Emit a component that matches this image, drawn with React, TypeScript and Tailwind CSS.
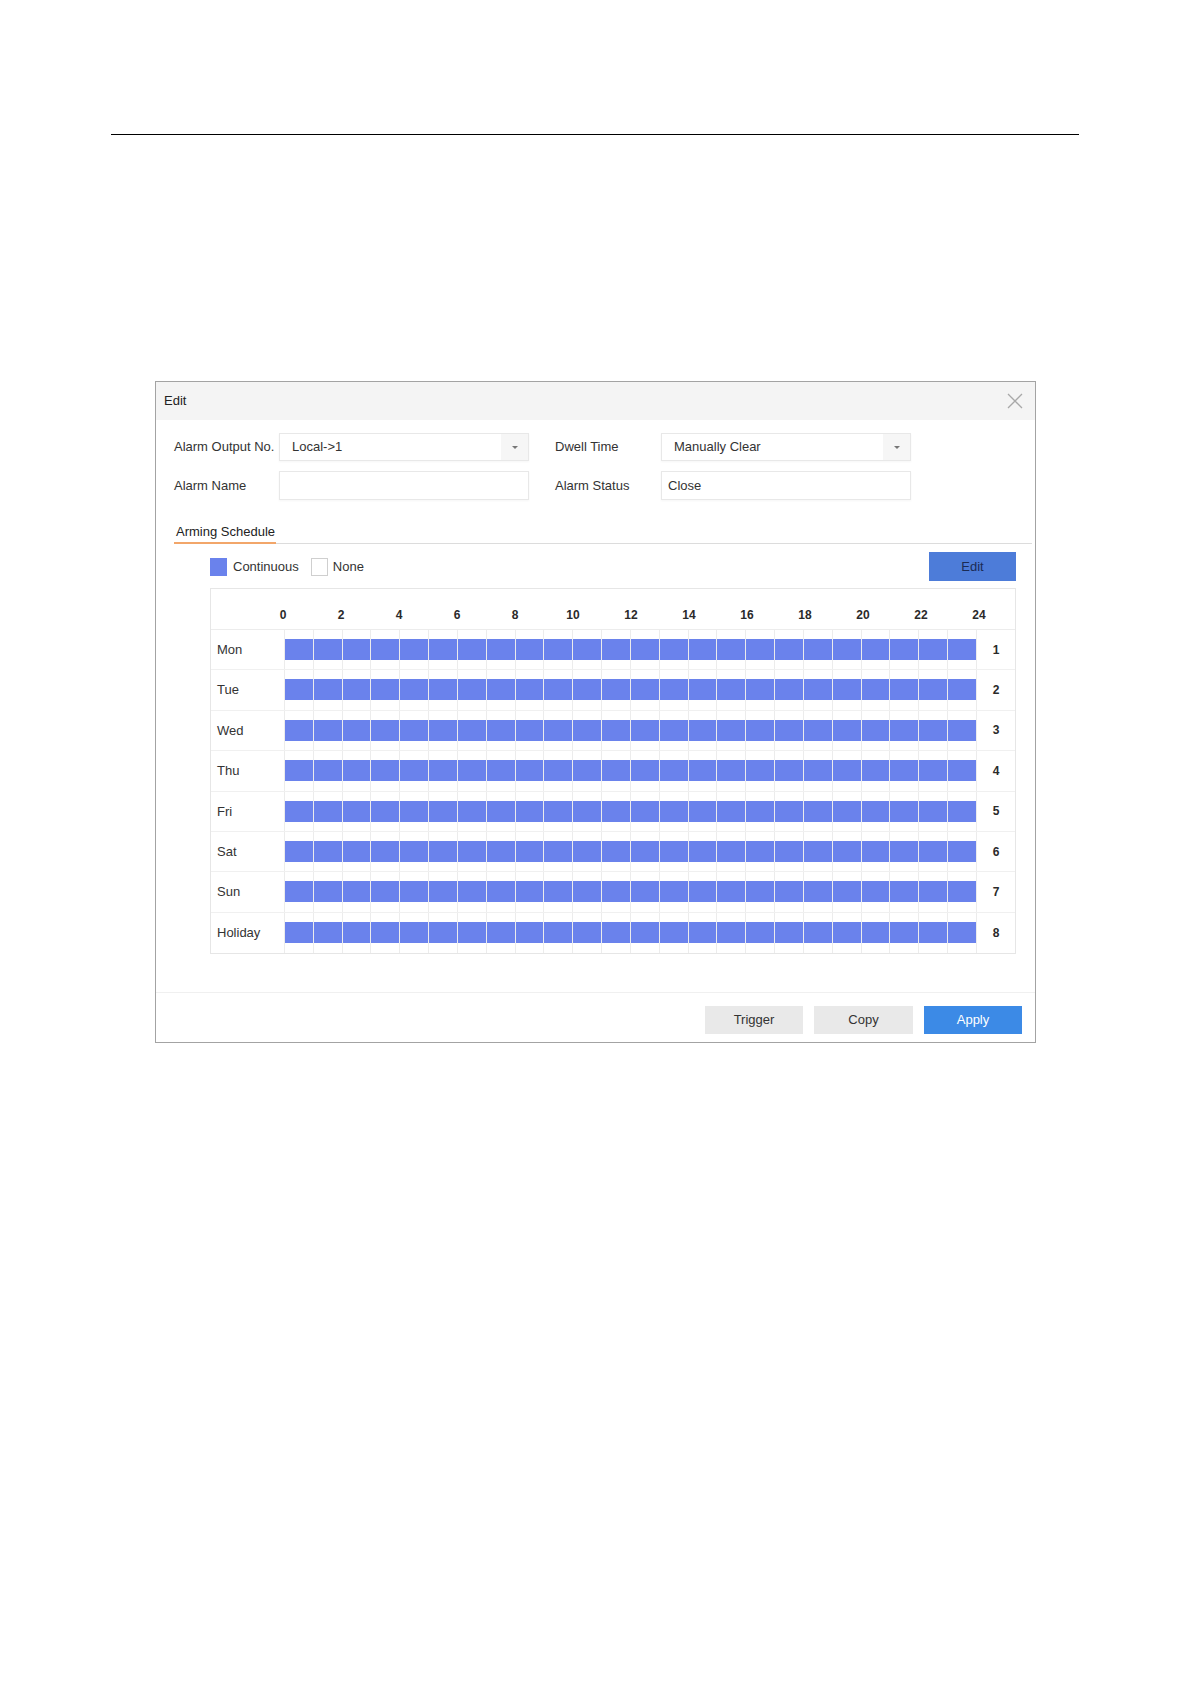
import React from 'react';

const days = ['Mon', 'Tue', 'Wed', 'Thu', 'Fri', 'Sat', 'Sun', 'Holiday'];
const hours = Array.from({ length: 24 }, (_, i) => i);
const ticks = [0, 2, 4, 6, 8, 10, 12, 14, 16, 18, 20, 22, 24];

function SelectBox({ value }: { value: string }) {
  return (
    <div className="flex h-[28px] w-[250px] border border-[#e8e8e8] bg-white shadow-[0_1px_2px_rgba(0,0,0,0.04)]">
      <div className="flex flex-1 items-center pl-[12px] text-[13px] text-[#333]">{value}</div>
      <div className="flex w-[27px] items-center justify-center bg-[#f6f6f6]">
        <span className="block h-0 w-0 border-x-[3px] border-t-[3px] border-x-transparent border-t-[#777]" />
      </div>
    </div>
  );
}

function TextBox({ value }: { value?: string }) {
  return (
    <div className="flex h-[29px] w-[250px] items-center border border-[#e8e8e8] bg-white pl-[6px] text-[13px] text-[#333] shadow-[0_1px_2px_rgba(0,0,0,0.04)]">
      {value}
    </div>
  );
}

export default function App() {
  return (
    <div className="min-h-[1684px] w-[1191px] bg-white font-['Liberation_Sans',Arial,sans-serif] text-[#333]">
      <div className="pt-[134px]">
        <div className="ml-[111px] h-px w-[968px] bg-black" />
      </div>

      {/* dialog */}
      <div className="ml-[155px] mt-[246px] w-[881px] border border-[#a3a3a3] bg-white">
        <div className="flex h-[38px] items-center justify-between bg-[#f4f4f4] pl-[8px] pr-[12px]">
          <span className="text-[13px] text-[#222]">Edit</span>
          <svg width="16" height="16" viewBox="0 0 16 16" stroke="#a8a8a8" strokeWidth="1.3" fill="none">
            <path d="M1 1L15 15M15 1L1 15" />
          </svg>
        </div>

        {/* form */}
        <div className="mt-[13px] flex flex-col gap-[10px] pl-[18px]">
          <div className="flex items-center">
            <span className="w-[105px] text-[13px]">Alarm Output No.</span>
            <SelectBox value="Local->1" />
            <span className="ml-[26px] w-[106px] text-[13px]">Dwell Time</span>
            <SelectBox value="Manually Clear" />
          </div>
          <div className="flex items-center">
            <span className="w-[105px] text-[13px]">Alarm Name</span>
            <TextBox />
            <span className="ml-[26px] w-[106px] text-[13px]">Alarm Status</span>
            <TextBox value="Close" />
          </div>
        </div>

        {/* tab */}
        <div className="ml-[18px] mr-[3px] mt-[24px] border-b border-[#dcdcdc]">
          <div className="-mb-px w-[102px] border-b-2 border-[#f2a66a] pb-[3px] pl-[2px] text-[13px] leading-[15px] text-[#222]">
            Arming Schedule
          </div>
        </div>

        {/* legend */}
        <div className="ml-[54px] mr-[19px] mt-[8px] flex h-[29px] items-center justify-between">
          <div className="flex items-center">
            <span className="h-[18px] w-[17px] bg-[#6a82ec]" />
            <span className="ml-[6px] text-[13px]">Continuous</span>
            <span className="ml-[12px] h-[18px] w-[17px] border border-[#cfcfcf] bg-white" />
            <span className="ml-[5px] text-[13px]">None</span>
          </div>
          <button className="h-[29px] w-[87px] bg-[#4d7cd9] text-[13px] text-[#1b2b55]">Edit</button>
        </div>

        {/* schedule table */}
        <div className="ml-[54px] mr-[19px] mt-[7px] border border-[#e6e6e6]">
          <div className="flex h-[41px] items-center border-b border-[#ececec] pt-[12px]">
            <div className="w-[43px]" />
            {ticks.map((t) => (
              <span key={t} className="w-[58px] text-center text-[12px] font-bold text-[#2a2a2a]">
                {t}
              </span>
            ))}
          </div>
          {days.map((d, i) => (
            <div key={d} className="grid h-[40.4px] grid-cols-[74px_692px_1fr] border-b border-[#f0f0f0] last:border-b-0">
              <div className="flex items-center border-r border-[#ececec] pl-[6px] text-[13px]">{d}</div>
              <div className="flex">
                {hours.map((h) => (
                  <div key={h} className="flex-1 border-r border-[#ececec] pt-[9px]">
                    <div className="h-[21px] bg-[#6a82ec]" />
                  </div>
                ))}
              </div>
              <div className="flex items-center justify-center text-[12px] font-bold text-[#2a2a2a]">{i + 1}</div>
            </div>
          ))}
        </div>

        {/* footer */}
        <div className="mt-[38px] flex justify-end gap-[11px] border-t border-[#f0f0f0] pb-[8px] pr-[13px] pt-[13px]">
          <button className="h-[28px] w-[98px] bg-[#e9e9e9] text-[13px] text-[#333]">Trigger</button>
          <button className="h-[28px] w-[99px] bg-[#e9e9e9] text-[13px] text-[#333]">Copy</button>
          <button className="h-[28px] w-[98px] bg-[#3c8ae6] text-[13px] text-white">Apply</button>
        </div>
      </div>
    </div>
  );
}
